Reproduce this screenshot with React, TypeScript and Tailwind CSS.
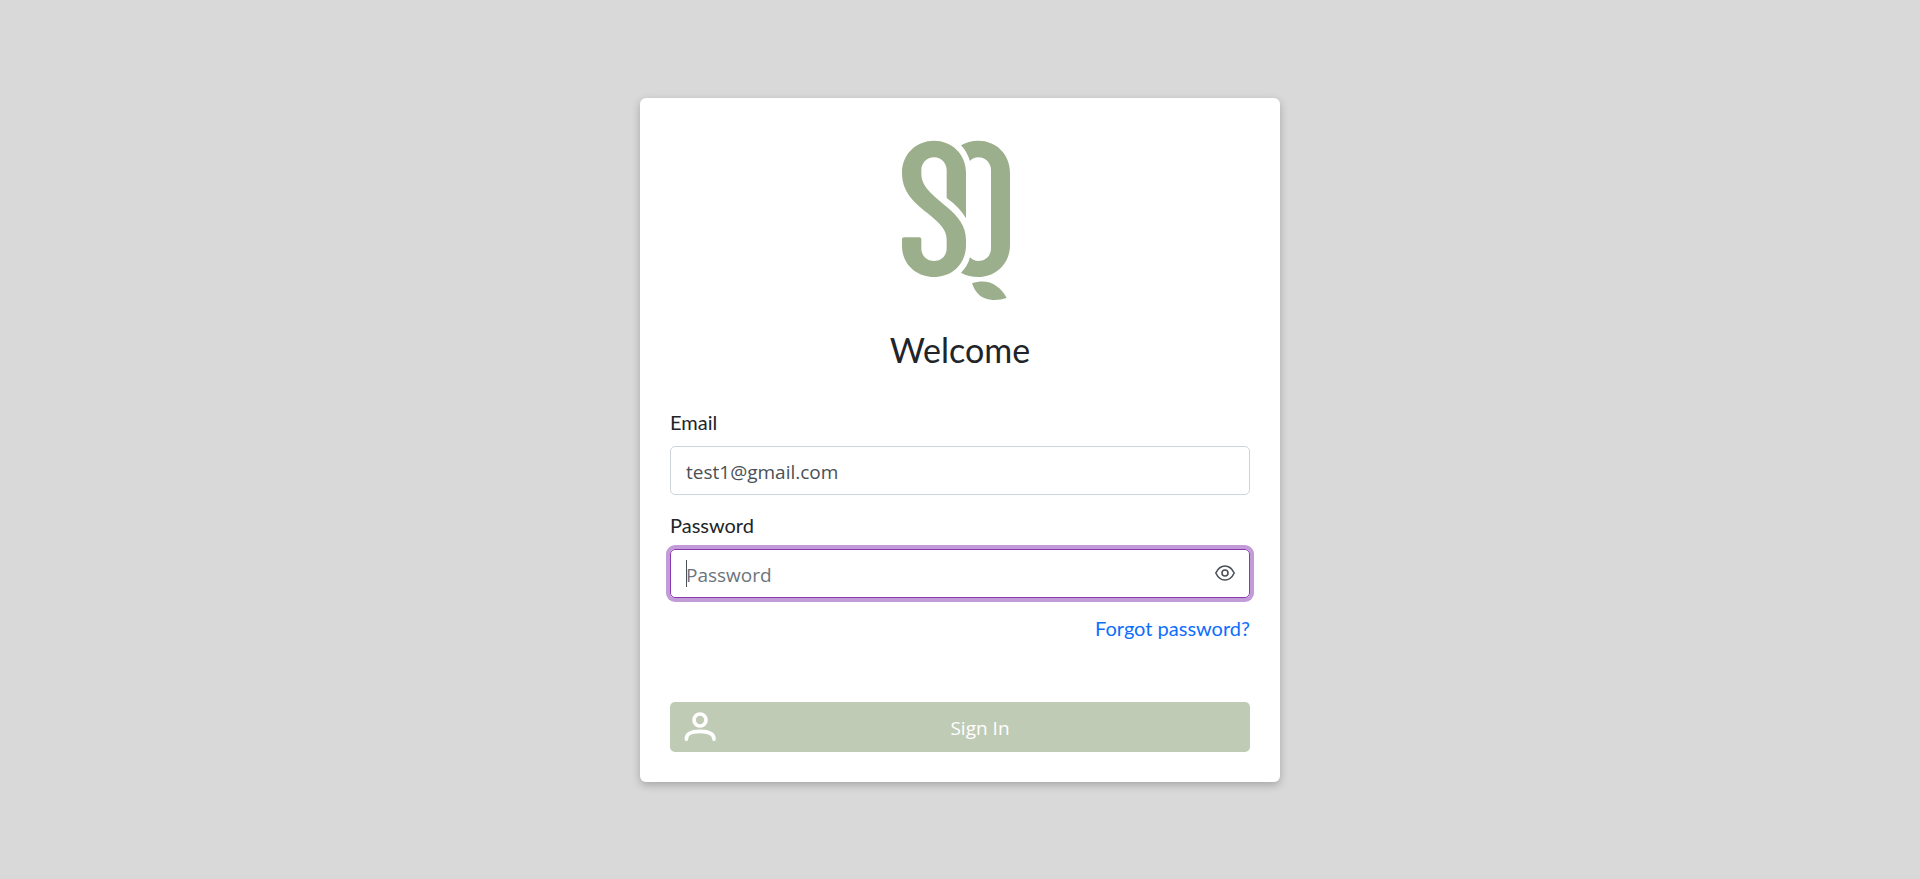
import { useState } from "react";

function Logo() {
  return (
    <svg viewBox="0 59 480 480" className="size-40" fill="#9caf8c" role="img" aria-label="SQ">
      <path d="M258 294V157C258 102 216 61 162 61S66 102 66 157C66 212 98 243 141 277C180 308 200 328 200 358V384C200 406 184 422 162 422S124 406 124 384V357Q124 351 118 351H72Q66 351 66 357V376C66 431 108 470 162 470S258 431 258 374V360C258 316 234 287 197 257C160 226 124 199 124 162V150C124 128 140 111 162 111S200 128 200 150V233Q238 260 258 294Z" />
      <path d="M243 75Q264 61 295 61C349 61 390 102 390 157V374C390 429 349 470 295 470Q266 470 243 457Q263 438 270 411Q280 422 295 422C317 422 333 406 333 384V150C333 128 317 111 295 111Q280 111 270 122Q261 94 243 75Z" />
      <path d="M276 489C322 473 358 492 380 533C334 546 293 541 276 489Z" />
    </svg>
  );
}

function UserIcon() {
  return (
    <svg viewBox="75 48 120 120" className="size-10 shrink-0" fill="none" stroke="#fff" strokeWidth="11" strokeLinecap="round" aria-hidden="true">
      <circle cx="135" cy="87" r="18" />
      <path d="M94 145C94 128 106 121 135 121S177 128 177 145" />
    </svg>
  );
}

function EyeIcon() {
  return (
    <svg viewBox="0 0 20 16" className="h-4 w-5" fill="none" stroke="#495057" strokeWidth="1.6" strokeLinejoin="round" aria-hidden="true">
      <path d="M0.8 8C3 3.4 6 1 10 1S17 3.4 19.2 8C17 12.6 14 15 10 15S3 12.6 0.8 8Z" />
      <circle cx="10" cy="8" r="3" />
    </svg>
  );
}

export default function App() {
  const [email, setEmail] = useState("test1@gmail.com");
  const [password, setPassword] = useState("");
  const [visible, setVisible] = useState(false);

  return (
    <main className="flex min-h-screen items-center justify-center bg-[#d9d9d9] font-['Lato',sans-serif] text-xl text-[#212529]">
      <form
        className="flex w-full max-w-[640px] flex-col rounded-md bg-white px-[30px] pt-[42px] pb-[30px] shadow-[0_3px_8px_rgba(0,0,0,0.24)]"
        onSubmit={(event) => event.preventDefault()}
      >
        <div className="flex justify-center">
          <Logo />
        </div>
        <h1 className="mt-7 text-center text-[34px] leading-11">Welcome</h1>

        <label htmlFor="email" className="mt-[35px] leading-[30px]">Email</label>
        <input
          id="email"
          type="email"
          value={email}
          onChange={(event) => setEmail(event.target.value)}
          className="mt-[9px] h-[49px] rounded-[5px] border border-[#ced4da] px-[15px] pt-[3px] font-['Open_Sans',sans-serif] text-[19px] text-[#495057] outline-none"
        />

        <label htmlFor="password" className="mt-[15px] leading-[30px]">Password</label>
        <div className="relative mt-[9px] flex h-[49px] items-center rounded-[5px] border border-[#8a3ab0] pr-[14px] pl-[15px] ring-4 ring-[#c39bd8]">
          <input
            id="password"
            type={visible ? "text" : "password"}
            value={password}
            placeholder="Password"
            onChange={(event) => setPassword(event.target.value)}
            className="h-full min-w-0 flex-1 pt-[3px] font-['Open_Sans',sans-serif] text-[19px] text-[#495057] caret-transparent outline-none placeholder:text-[#6c757d]"
          />
          <span className="absolute left-[15px] h-[27px] w-px bg-[#495057]" />
          <button type="button" aria-label="Show password" onClick={() => setVisible(!visible)}>
            <EyeIcon />
          </button>
        </div>

        <a href="#forgot" className="mt-[15px] self-end leading-[30px] text-[#0d6efd]">Forgot password?</a>

        <button
          type="submit"
          className="mt-[59px] flex h-[50px] items-center rounded-[5px] bg-[#bfcbb5] px-[10px] font-['Open_Sans',sans-serif] text-[19px] font-medium text-white"
        >
          <UserIcon />
          <span className="flex-1 pt-1">Sign In</span>
        </button>
      </form>
    </main>
  );
}
